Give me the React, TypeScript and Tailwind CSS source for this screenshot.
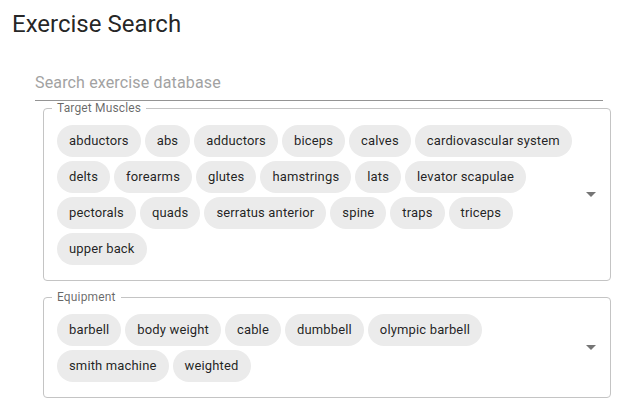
const muscles = [
  "abductors",
  "abs",
  "adductors",
  "biceps",
  "calves",
  "cardiovascular system",
  "delts",
  "forearms",
  "glutes",
  "hamstrings",
  "lats",
  "levator scapulae",
  "pectorals",
  "quads",
  "serratus anterior",
  "spine",
  "traps",
  "triceps",
  "upper back",
];

const equipment = [
  "barbell",
  "body weight",
  "cable",
  "dumbbell",
  "olympic barbell",
  "smith machine",
  "weighted",
];

function Chip({ label }: { label: string }) {
  return (
    <div className="h-8 px-3 flex items-center rounded-full bg-[#ebebeb] text-[13px] tracking-[0.15px] text-black/[0.87] whitespace-nowrap">
      {label}
    </div>
  );
}

function ChipSelect({ label, items }: { label: string; items: string[] }) {
  return (
    <fieldset className="ml-2 w-[568px] border border-[#c4c4c4] rounded-[4px] p-0 m-0">
      <legend className="ml-2 px-[5px] text-[12px] leading-[12px] tracking-[0.15px] text-black/60">
        {label}
      </legend>
      <div className="flex">
        <div className="flex-1 flex flex-wrap gap-1 pl-[13px] pt-[11px] pb-[15px]">
          {items.map((item) => (
            <Chip key={item} label={item} />
          ))}
        </div>
        {/* dropdown arrow */}
        <div className="self-center mr-[7px] -mt-[7px]">
          <svg width="24" height="24" viewBox="0 0 24 24" className="fill-black/[0.54]">
            <path d="M7 10l5 5 5-5z" />
          </svg>
        </div>
      </div>
    </fieldset>
  );
}

export default function App() {
  return (
    <main className="min-h-screen bg-white font-['Roboto',sans-serif] text-black/[0.87]">
      <h1 className="pt-2 pl-3 text-[24px] leading-[32px] font-normal">Exercise Search</h1>

      <div className="ml-[35px] mt-[27px] w-[568px]">
        {/* SEARCH */}
        <div className="pt-1 pb-[5px] border-b border-[#949494]">
          <input
            className="w-full h-[23px] text-[16px] tracking-[0.15px] outline-none placeholder:text-[#a2a2a2] bg-transparent"
            placeholder="Search exercise database"
          />
        </div>

        <div className="mt-[1px]">
          <ChipSelect label="Target Muscles" items={muscles} />
        </div>
        <div className="mt-[10px]">
          <ChipSelect label="Equipment" items={equipment} />
        </div>
      </div>
    </main>
  );
}
